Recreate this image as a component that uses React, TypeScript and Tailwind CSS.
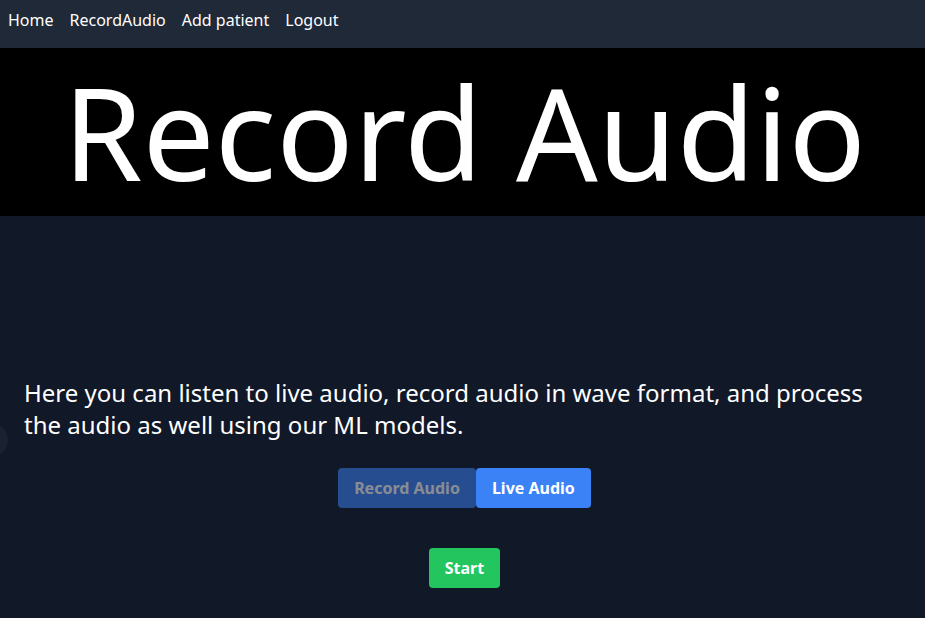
export default function App() {
  const font = { fontFamily: '"Noto Sans", sans-serif' }
  return (
    <div className="relative min-h-[618px] bg-[#111827] text-white overflow-hidden" style={font}>
      {/* top nav */}
      <nav className="h-12 bg-[#1f2937] flex items-start gap-4 px-2 pt-2 text-base">
        <a href="#">Home</a>
        <a href="#">RecordAudio</a>
        <a href="#">Add patient</a>
        <a href="#">Logout</a>
      </nav>

      <header className="bg-black py-5 pl-1 text-center">
        <h1 className="text-9xl leading-none">Record Audio</h1>
      </header>

      <main className="px-6 pt-[161px]">
        <p className="text-2xl leading-8">
          Here you can listen to live audio, record audio in wave format, and process the audio as well using our ML models.
        </p>
        <div className="mt-[27px] pl-1 flex justify-center">
          <button disabled className="px-4 py-2 rounded bg-[#3b82f6] font-bold opacity-50">Record Audio</button>
          <button className="px-4 py-2 rounded bg-[#3b82f6] font-bold">Live Audio</button>
        </div>
        <div className="mt-10 pl-1 flex justify-center">
          <button className="px-4 py-2 rounded bg-[#22c55e] font-bold">Start</button>
        </div>
      </main>

      {/* faint floating toggle at the edge */}
      <div className="absolute left-[-24px] top-[424px] w-8 h-8 rounded-full bg-[#1f2937]/60"></div>
    </div>
  )
}
